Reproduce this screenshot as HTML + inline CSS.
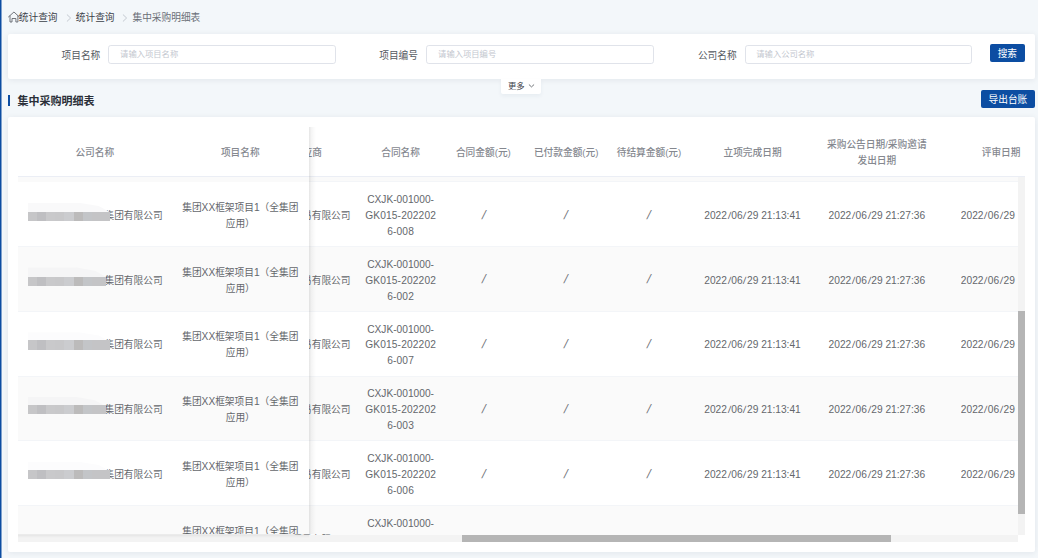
<!DOCTYPE html><html lang="zh-CN"><head><meta charset="utf-8"><title>集中采购明细表</title><style>
*{box-sizing:border-box;margin:0;padding:0}
html,body{width:1038px;height:558px;overflow:hidden}
body{position:relative;background:#f3f7fa;font-family:"Liberation Sans","Noto Sans CJK SC",sans-serif;font-size:9.7px;color:#606266}
.a{position:absolute}
#strip{left:0;top:0;width:2px;height:558px;background:linear-gradient(to right,#0c4da2 0,#0c4da2 1px,#7fa1cd 1px,#7fa1cd 2px)}
.bc{left:8px;top:10.4px;height:15px;line-height:15px;white-space:nowrap;font-size:9.7px}
.bc span{position:absolute;top:0}
.card{background:#fff;border-radius:2px;box-shadow:0 1px 6px rgba(10,30,50,.075)}
.lbl{top:45.6px;height:18.7px;line-height:19.2px;text-align:right;width:80px;font-size:9.7px;color:#555a61;white-space:nowrap}
.inp{top:45px;height:18.7px;border:0.8px solid #e0e3ea;border-radius:2.8px;background:#fff;font-size:8.3px;line-height:17.4px;color:#c3c7cf;padding-left:10.8px;white-space:nowrap}
.btn{background:#0c4da2;color:#fff;border-radius:2px;text-align:center;font-size:9.7px;white-space:nowrap}
.th{top:127.4px;height:49px;padding-top:1.6px;display:flex;align-items:center;justify-content:center;text-align:center;font-weight:500;color:#85888f;line-height:15.9px;font-size:9.7px}
.row{left:18.3px;width:1006.4px;height:64.75px;border-bottom:1px solid #f3f5f8}
.c{top:1.6px;height:64px;display:flex;align-items:center;justify-content:center;text-align:center;line-height:15.9px;color:#64676c;font-size:9.7px;white-space:nowrap}
.lt{font-size:10.2px;letter-spacing:.15px}
.dt{font-size:10.2px;letter-spacing:0}
.dt i{font-style:normal;display:inline-block;transform:skewX(-6deg);margin:0 .75px}
.sl{display:inline-block;font-size:12.6px;transform:skewX(-13deg);position:relative;top:-0.4px;color:#74777c}
.l{font-size:10.2px}

</style></head><body>
<div id="strip" class="a"></div>
<div class="a bc">
<svg class="a" style="left:-0.5px;top:0.5px" width="12" height="12" viewBox="0 0 12 12" fill="none" stroke="#50555d" stroke-width="0.8" stroke-linejoin="round" stroke-linecap="round"><path d="M0.5 5.9 L5.95 1 L11.3 5.9"/><path d="M2 5 V11 H4 V7.5 H7.9 V11 H9.9 V5"/></svg>
<span style="left:10.8px;color:#3b4048">统计查询</span>
<svg class="a" style="left:58.2px;top:3.3px" width="6" height="8" viewBox="0 0 6 8" fill="none" stroke="#b9bec7" stroke-width="0.8" stroke-linecap="round" stroke-linejoin="round"><path d="M1.2 0.8 L4.6 4 L1.2 7.2"/></svg>
<span style="left:67.8px;color:#3b4048">统计查询</span>
<svg class="a" style="left:114.2px;top:3.3px" width="6" height="8" viewBox="0 0 6 8" fill="none" stroke="#b9bec7" stroke-width="0.8" stroke-linecap="round" stroke-linejoin="round"><path d="M1.2 0.8 L4.6 4 L1.2 7.2"/></svg>
<span style="left:124.5px;color:#6a6f77">集中采购明细表</span>
</div>
<div class="a card" style="left:8px;top:33.8px;width:1027px;height:44.9px"></div>
<div class="a lbl" style="left:20.3px">项目名称</div>
<div class="a inp" style="left:108.3px;width:228px">请输入项目名称</div>
<div class="a lbl" style="left:338.0px">项目编号</div>
<div class="a inp" style="left:426.3px;width:227.7px">请输入项目编号</div>
<div class="a lbl" style="left:656.7px">公司名称</div>
<div class="a inp" style="left:744.5px;width:227.2px">请输入公司名称</div>
<div class="a btn" style="left:990px;top:44px;width:34.7px;height:18px;line-height:19.6px">搜索</div>
<div class="a" style="left:501.3px;top:78.6px;width:39.7px;height:15.2px;background:#fff;border-radius:0 0 2px 2px;box-shadow:0 2px 4px rgba(30,60,110,.06);font-size:8.3px;line-height:14.6px;color:#3d4149;white-space:nowrap"><span class="a" style="left:6.6px;top:0">更多</span>
<svg class="a" style="left:26.6px;top:4.4px" width="7" height="6" viewBox="0 0 7 6" fill="none" stroke="#4f545b" stroke-width="0.8" stroke-linecap="round" stroke-linejoin="round"><path d="M1.2 1.8 L3.5 3.9 L5.8 1.8"/></svg></div>
<div class="a" style="left:8px;top:94.7px;width:2.4px;height:11.3px;background:#0c4da2"></div>
<div class="a" style="left:17.4px;top:92px;height:18px;line-height:18px;font-size:11px;font-weight:bold;color:#2a2f38;white-space:nowrap">集中采购明细表</div>
<div class="a btn" style="left:980.8px;top:90px;width:54.2px;height:17.8px;line-height:20.4px">导出台账</div>
<div class="a card" style="left:8px;top:117px;width:1027px;height:435.2px"></div>
<div class="a" id="hdr" style="left:18.3px;top:127.4px;width:1006.4px;height:49.9px;overflow:hidden;border-bottom:1px solid #ebeef5">
<div class="a th" style="top:0;left:237.4px;width:103.5px"><div>供应商</div></div>
<div class="a th" style="top:0;left:340.9px;width:82.8px"><div>合同名称</div></div>
<div class="a th" style="top:0;left:423.7px;width:82.8px"><div>合同金额(元)</div></div>
<div class="a th" style="top:0;left:506.5px;width:82.8px"><div>已付款金额(元)</div></div>
<div class="a th" style="top:0;left:589.3px;width:82.8px"><div>待结算金额(元)</div></div>
<div class="a th" style="top:0;left:672.1px;width:124.3px"><div>立项完成日期</div></div>
<div class="a th" style="top:0;left:796.4px;width:124.3px"><div>采购公告日期/采购邀请<br>发出日期</div></div>
<div class="a th" style="top:0;left:920.7px;width:124.3px"><div>评审日期</div></div>
</div>
<div class="a" id="body" style="left:18.3px;top:177px;width:1006.4px;height:358px;overflow:hidden;background:#fff">
<div class="a row" style="left:0;top:-59.45px;background:#fafafa">
</div>
<div class="a row" style="left:0;top:5.30px;background:#fff">
<div class="a c" style="left:237.4px;width:103.5px"><span style="position:absolute;right:8.7px">XX贸易有限公司</span></div>
<div class="a c lt" style="left:340.9px;width:82.8px"><div><span style="letter-spacing:0">CXJK-001000-</span><br>GK015-202202<br>6-008</div></div>
<div class="a c" style="left:423.7px;width:82.8px"><div><span class="sl">/</span></div></div>
<div class="a c" style="left:506.5px;width:82.8px"><div><span class="sl">/</span></div></div>
<div class="a c" style="left:589.3px;width:82.8px"><div><span class="sl">/</span></div></div>
<div class="a c dt" style="left:672.1px;width:124.3px"><div>2022<i>/</i>06<i>/</i>29 21:13:41</div></div>
<div class="a c dt" style="left:796.4px;width:124.3px"><div>2022<i>/</i>06<i>/</i>29 21:27:36</div></div>
<div class="a c dt" style="left:942.5px;width:55.6px;overflow:hidden;justify-content:flex-start"><div>2022<i>/</i>06<i>/</i>29 21:31:02</div></div>
</div>
<div class="a row" style="left:0;top:70.05px;background:#fafafa">
<div class="a c" style="left:237.4px;width:103.5px"><span style="position:absolute;right:8.7px">XX贸易有限公司</span></div>
<div class="a c lt" style="left:340.9px;width:82.8px"><div><span style="letter-spacing:0">CXJK-001000-</span><br>GK015-202202<br>6-002</div></div>
<div class="a c" style="left:423.7px;width:82.8px"><div><span class="sl">/</span></div></div>
<div class="a c" style="left:506.5px;width:82.8px"><div><span class="sl">/</span></div></div>
<div class="a c" style="left:589.3px;width:82.8px"><div><span class="sl">/</span></div></div>
<div class="a c dt" style="left:672.1px;width:124.3px"><div>2022<i>/</i>06<i>/</i>29 21:13:41</div></div>
<div class="a c dt" style="left:796.4px;width:124.3px"><div>2022<i>/</i>06<i>/</i>29 21:27:36</div></div>
<div class="a c dt" style="left:942.5px;width:55.6px;overflow:hidden;justify-content:flex-start"><div>2022<i>/</i>06<i>/</i>29 21:31:02</div></div>
</div>
<div class="a row" style="left:0;top:134.80px;background:#fff">
<div class="a c" style="left:237.4px;width:103.5px"><span style="position:absolute;right:8.7px">XX贸易有限公司</span></div>
<div class="a c lt" style="left:340.9px;width:82.8px"><div><span style="letter-spacing:0">CXJK-001000-</span><br>GK015-202202<br>6-007</div></div>
<div class="a c" style="left:423.7px;width:82.8px"><div><span class="sl">/</span></div></div>
<div class="a c" style="left:506.5px;width:82.8px"><div><span class="sl">/</span></div></div>
<div class="a c" style="left:589.3px;width:82.8px"><div><span class="sl">/</span></div></div>
<div class="a c dt" style="left:672.1px;width:124.3px"><div>2022<i>/</i>06<i>/</i>29 21:13:41</div></div>
<div class="a c dt" style="left:796.4px;width:124.3px"><div>2022<i>/</i>06<i>/</i>29 21:27:36</div></div>
<div class="a c dt" style="left:942.5px;width:55.6px;overflow:hidden;justify-content:flex-start"><div>2022<i>/</i>06<i>/</i>29 21:31:02</div></div>
</div>
<div class="a row" style="left:0;top:199.55px;background:#fafafa">
<div class="a c" style="left:237.4px;width:103.5px"><span style="position:absolute;right:8.7px">XX贸易有限公司</span></div>
<div class="a c lt" style="left:340.9px;width:82.8px"><div><span style="letter-spacing:0">CXJK-001000-</span><br>GK015-202202<br>6-003</div></div>
<div class="a c" style="left:423.7px;width:82.8px"><div><span class="sl">/</span></div></div>
<div class="a c" style="left:506.5px;width:82.8px"><div><span class="sl">/</span></div></div>
<div class="a c" style="left:589.3px;width:82.8px"><div><span class="sl">/</span></div></div>
<div class="a c dt" style="left:672.1px;width:124.3px"><div>2022<i>/</i>06<i>/</i>29 21:13:41</div></div>
<div class="a c dt" style="left:796.4px;width:124.3px"><div>2022<i>/</i>06<i>/</i>29 21:27:36</div></div>
<div class="a c dt" style="left:942.5px;width:55.6px;overflow:hidden;justify-content:flex-start"><div>2022<i>/</i>06<i>/</i>29 21:31:02</div></div>
</div>
<div class="a row" style="left:0;top:264.30px;background:#fff">
<div class="a c" style="left:237.4px;width:103.5px"><span style="position:absolute;right:8.7px">XX贸易有限公司</span></div>
<div class="a c lt" style="left:340.9px;width:82.8px"><div><span style="letter-spacing:0">CXJK-001000-</span><br>GK015-202202<br>6-006</div></div>
<div class="a c" style="left:423.7px;width:82.8px"><div><span class="sl">/</span></div></div>
<div class="a c" style="left:506.5px;width:82.8px"><div><span class="sl">/</span></div></div>
<div class="a c" style="left:589.3px;width:82.8px"><div><span class="sl">/</span></div></div>
<div class="a c dt" style="left:672.1px;width:124.3px"><div>2022<i>/</i>06<i>/</i>29 21:13:41</div></div>
<div class="a c dt" style="left:796.4px;width:124.3px"><div>2022<i>/</i>06<i>/</i>29 21:27:36</div></div>
<div class="a c dt" style="left:942.5px;width:55.6px;overflow:hidden;justify-content:flex-start"><div>2022<i>/</i>06<i>/</i>29 21:31:02</div></div>
</div>
<div class="a row" style="left:0;top:329.05px;background:#fafafa">
<div class="a c" style="left:237.4px;width:103.5px"><span style="position:absolute;right:8.7px">XX贸易有限公司</span></div>
<div class="a c lt" style="left:340.9px;width:82.8px"><div><span style="letter-spacing:0">CXJK-001000-</span><br>GK015-202202<br>6-005</div></div>
<div class="a c dt" style="left:672.1px;width:124.3px"><div>2022<i>/</i>06<i>/</i>29 21:13:41</div></div>
<div class="a c dt" style="left:796.4px;width:124.3px"><div>2022<i>/</i>06<i>/</i>29 21:27:36</div></div>
<div class="a c dt" style="left:942.5px;width:55.6px;overflow:hidden;justify-content:flex-start"><div>2022<i>/</i>06<i>/</i>29 21:31:02</div></div>
</div>
</div>
<div class="a" style="left:1018px;top:177px;width:6.7px;height:358px;background:#f3f3f3"></div>
<div class="a" style="left:1018px;top:311px;width:6.7px;height:202.8px;background:#b5b5b5"></div>
<div class="a" style="left:18.3px;top:535px;width:999.7px;height:6.8px;background:#f3f3f3"></div>
<div class="a" style="left:462.2px;top:535.2px;width:428.6px;height:6.4px;background:#b5b5b5"></div>
<div class="a" id="fix" style="left:18.3px;top:127.4px;width:291px;height:406.6px;overflow:hidden;background:#fff;">
<div class="a th" style="top:0;left:0;width:153px">公司名称</div>
<div class="a th" style="top:0;left:153px;width:138px">项目名称</div>
<div class="a" style="left:0;top:48.9px;width:291px;height:1px;background:#ebeef5"></div>
<div class="a" style="left:0;top:49.6px;width:291px;height:5.3px;background:#fafafa"></div>
<div class="a row" style="left:0;width:291px;top:54.90px;background:#fff">
<div class="a c" style="left:0;width:153px"><span style="position:absolute;left:86.2px">集团有限公司</span></div>
<div class="a c" style="left:153px;width:138px"><div>集团<span class="l">XX</span>框架项目<span class="l">1</span>（全集团<br>应用）</div></div>
<div class="a" style="left:9.4px;top:20.4px;width:82.5px;height:9.6px;background:#f9f9fa;clip-path:polygon(0 0,51.1px 0,71.0px 35%,100% 100%,0 100%)"></div>
<div class="a" style="left:9.4px;top:29.6px;width:9.5px;height:8.9px;background:#c6c6c8"></div>
<div class="a" style="left:18.6px;top:29.6px;width:9.5px;height:8.9px;background:#bfbfc2"></div>
<div class="a" style="left:27.8px;top:29.6px;width:9.5px;height:8.9px;background:#c9c9cb"></div>
<div class="a" style="left:37.0px;top:29.6px;width:9.5px;height:8.9px;background:#c8c8ca"></div>
<div class="a" style="left:46.2px;top:29.6px;width:9.5px;height:8.9px;background:#cbcccf"></div>
<div class="a" style="left:55.4px;top:29.6px;width:9.5px;height:8.9px;background:#bcbbbb"></div>
<div class="a" style="left:64.6px;top:29.6px;width:9.5px;height:8.9px;background:#c3c5c8"></div>
<div class="a" style="left:73.8px;top:29.6px;width:17.9px;height:8.9px;background:#c4c4c6"></div>
</div>
<div class="a row" style="left:0;width:291px;top:119.65px;background:#fafafa">
<div class="a c" style="left:0;width:153px"><span style="position:absolute;left:86.2px">集团有限公司</span></div>
<div class="a c" style="left:153px;width:138px"><div>集团<span class="l">XX</span>框架项目<span class="l">1</span>（全集团<br>应用）</div></div>
<div class="a" style="left:9.4px;top:20.4px;width:78.4px;height:9.6px;background:#f5f5f6;clip-path:polygon(0 0,48.6px 0,67.4px 35%,100% 100%,0 100%)"></div>
<div class="a" style="left:9.4px;top:29.6px;width:9.5px;height:8.9px;background:#c6c6c8"></div>
<div class="a" style="left:18.6px;top:29.6px;width:9.5px;height:8.9px;background:#bfbfc2"></div>
<div class="a" style="left:27.8px;top:29.6px;width:9.5px;height:8.9px;background:#c9c9cb"></div>
<div class="a" style="left:37.0px;top:29.6px;width:9.5px;height:8.9px;background:#c8c8ca"></div>
<div class="a" style="left:46.2px;top:29.6px;width:9.5px;height:8.9px;background:#cbcccf"></div>
<div class="a" style="left:55.4px;top:29.6px;width:9.5px;height:8.9px;background:#bcbbbb"></div>
<div class="a" style="left:64.6px;top:29.6px;width:9.5px;height:8.9px;background:#c3c5c8"></div>
<div class="a" style="left:73.8px;top:29.6px;width:13.8px;height:8.9px;background:#c4c4c6"></div>
</div>
<div class="a row" style="left:0;width:291px;top:184.40px;background:#fff">
<div class="a c" style="left:0;width:153px"><span style="position:absolute;left:86.2px">集团有限公司</span></div>
<div class="a c" style="left:153px;width:138px"><div>集团<span class="l">XX</span>框架项目<span class="l">1</span>（全集团<br>应用）</div></div>
<div class="a" style="left:9.4px;top:20.4px;width:82.5px;height:9.6px;background:#fcfcfd;clip-path:polygon(0 0,51.1px 0,71.0px 35%,100% 100%,0 100%)"></div>
<div class="a" style="left:9.4px;top:28.5px;width:9.5px;height:9.4px;background:#c6c6c8"></div>
<div class="a" style="left:18.6px;top:28.5px;width:9.5px;height:9.4px;background:#bfbfc2"></div>
<div class="a" style="left:27.8px;top:28.5px;width:9.5px;height:9.4px;background:#c9c9cb"></div>
<div class="a" style="left:37.0px;top:28.5px;width:9.5px;height:9.4px;background:#c8c8ca"></div>
<div class="a" style="left:46.2px;top:28.5px;width:9.5px;height:9.4px;background:#cbcccf"></div>
<div class="a" style="left:55.4px;top:28.5px;width:9.5px;height:9.4px;background:#bcbbbb"></div>
<div class="a" style="left:64.6px;top:28.5px;width:9.5px;height:9.4px;background:#c3c5c8"></div>
<div class="a" style="left:73.8px;top:28.5px;width:17.9px;height:9.4px;background:#c4c4c6"></div>
</div>
<div class="a row" style="left:0;width:291px;top:249.15px;background:#fafafa">
<div class="a c" style="left:0;width:153px"><span style="position:absolute;left:86.2px">集团有限公司</span></div>
<div class="a c" style="left:153px;width:138px"><div>集团<span class="l">XX</span>框架项目<span class="l">1</span>（全集团<br>应用）</div></div>
<div class="a" style="left:9.4px;top:20.4px;width:78.4px;height:9.6px;background:#f5f5f6;clip-path:polygon(0 0,48.6px 0,67.4px 35%,100% 100%,0 100%)"></div>
<div class="a" style="left:9.4px;top:28.5px;width:9.5px;height:9.4px;background:#c6c6c8"></div>
<div class="a" style="left:18.6px;top:28.5px;width:9.5px;height:9.4px;background:#bfbfc2"></div>
<div class="a" style="left:27.8px;top:28.5px;width:9.5px;height:9.4px;background:#c9c9cb"></div>
<div class="a" style="left:37.0px;top:28.5px;width:9.5px;height:9.4px;background:#c8c8ca"></div>
<div class="a" style="left:46.2px;top:28.5px;width:9.5px;height:9.4px;background:#cbcccf"></div>
<div class="a" style="left:55.4px;top:28.5px;width:9.5px;height:9.4px;background:#bcbbbb"></div>
<div class="a" style="left:64.6px;top:28.5px;width:9.5px;height:9.4px;background:#c3c5c8"></div>
<div class="a" style="left:73.8px;top:28.5px;width:13.8px;height:9.4px;background:#c4c4c6"></div>
</div>
<div class="a row" style="left:0;width:291px;top:313.90px;background:#fff">
<div class="a c" style="left:0;width:153px"><span style="position:absolute;left:86.2px">集团有限公司</span></div>
<div class="a c" style="left:153px;width:138px"><div>集团<span class="l">XX</span>框架项目<span class="l">1</span>（全集团<br>应用）</div></div>
<div class="a" style="left:9.4px;top:20.4px;width:82.5px;height:9.6px;background:#fcfcfd;clip-path:polygon(0 0,51.1px 0,71.0px 35%,100% 100%,0 100%)"></div>
<div class="a" style="left:9.4px;top:28.5px;width:9.5px;height:9.4px;background:#c6c6c8"></div>
<div class="a" style="left:18.6px;top:28.5px;width:9.5px;height:9.4px;background:#bfbfc2"></div>
<div class="a" style="left:27.8px;top:28.5px;width:9.5px;height:9.4px;background:#c9c9cb"></div>
<div class="a" style="left:37.0px;top:28.5px;width:9.5px;height:9.4px;background:#c8c8ca"></div>
<div class="a" style="left:46.2px;top:28.5px;width:9.5px;height:9.4px;background:#cbcccf"></div>
<div class="a" style="left:55.4px;top:28.5px;width:9.5px;height:9.4px;background:#bcbbbb"></div>
<div class="a" style="left:64.6px;top:28.5px;width:9.5px;height:9.4px;background:#c3c5c8"></div>
<div class="a" style="left:73.8px;top:28.5px;width:17.9px;height:9.4px;background:#c4c4c6"></div>
</div>
<div class="a row" style="left:0;width:291px;top:378.65px;background:#fafafa">
<div class="a c" style="left:0;width:153px"><span style="position:absolute;left:86.2px">集团有限公司</span></div>
<div class="a c" style="left:153px;width:138px"><div>集团<span class="l">XX</span>框架项目<span class="l">1</span>（全集团<br>应用）</div></div>
</div>
</div>
<div class="a" style="left:309.3px;top:127.4px;width:7px;height:406.6px;background:linear-gradient(to right,rgba(0,0,0,.10),rgba(0,0,0,.04) 35%,rgba(0,0,0,0))"></div>
<div class="a" style="left:18.3px;top:534px;width:291px;height:4px;background:linear-gradient(to bottom,rgba(0,0,0,.07),rgba(0,0,0,0))"></div>
</body></html>
